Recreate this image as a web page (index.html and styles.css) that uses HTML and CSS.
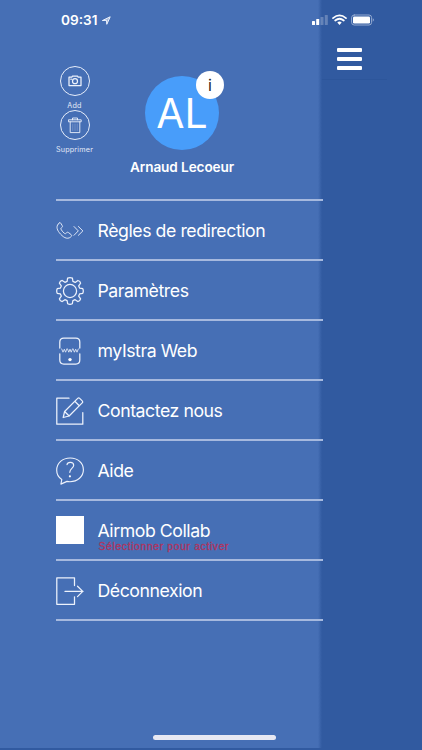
FILE: index.html
```html
<!DOCTYPE html>
<html lang="fr">
<head>
<meta charset="utf-8">
<title>Menu</title>
<link rel="stylesheet" href="styles.css">
</head>
<body>
<div class="screen">
  <aside class="drawer">
    <header class="profile">
      <div class="photo-actions">
        <div class="round"><svg width="14" height="12" viewBox="0 0 14 12"><path d="M1 2.2h2.8l.7-1.2h5l.7 1.2H13v8.3H1z"/><circle cx="7" cy="6.2" r="2.5"/><path d="M2.8 4.2h.6"/></svg></div>
        <span>Add</span>
        <div class="round"><svg class="thin" width="14" height="17" viewBox="0 0 14 17"><path d="M.8 2.8h12.4v2H.8zM4.5 2.8V1h5v1.8M2.2 4.8v10.8h9.6V4.8"/><path opacity=".3" d="M4.8 7v6.5M7 7v6.5M9.2 7v6.5"/></svg></div>
        <span>Supprimer</span>
      </div>
      <div class="identity">
        <div class="avatar">AL<span class="info">i</span></div>
        <div class="name">Arnaud Lecoeur</div>
      </div>
    </header>
    <nav class="menu">
      <div class="item"><svg class="thin" viewBox="0 0 28 28"><path d="M3 6.2C.2 8.5.3 12 3.4 15.8c3.3 4.1 7.5 7.3 11.3 4.2 1.2-1 1.3-1.6.2-2.6l-2.4-1.8c-1-.7-1.6-.3-2.4.6-.6.7-1.3.5-2.1-.2-1.3-1.1-2.4-2.5-3-3.8-.3-.8 0-1.2.7-1.6.8-.5 1-1.1.5-2L4.9 6.4C4.3 5.4 3.8 5.5 3 6.2zM18 9.5l4.3 4.4-4.3 4.4M22.4 9.5l4.5 4.4-4.5 4.4"/></svg><span>Règles de redirection</span></div>
      <div class="item"><svg viewBox="0 0 28 28"><path d="M11.6 1.2Q14 .2 16.4 1.2L16.9 4.4 19.2 5.4 21.9 3.5Q24.2 4 24.6 6.2L22.7 8.9 23.6 11.1 26.8 11.7Q27.8 14 26.8 16.3L23.6 16.9 22.7 19.1 24.6 21.8Q24 24.2 21.8 24.6L19.1 22.7 16.9 23.6 16.3 26.8Q14 27.8 11.7 26.8L11.1 23.6 8.9 22.7 6.2 24.6Q3.8 24 3.4 21.8L5.3 19.1 4.4 16.9 1.2 16.3Q.2 14 1.2 11.7L4.4 11.1 5.3 8.9 3.4 6.2Q4 3.8 6.2 3.4L8.9 5.3 11.1 4.4z"/><circle cx="14" cy="14" r="6.6"/></svg><span>Paramètres</span></div>
      <div class="item"><svg viewBox="0 0 28 28"><path d="M3.8 11V5q0-4 4-4h12q4 0 4 4v6M3.8 16.8V23q0 4 4 4h12q4 0 4-4v-6.2"/><path class="web" d="M5.7 12l1.3 3.2 1.3-3 1.3 3 1.2-3.2M11.5 12l1.3 3.2 1.2-3 1.2 3 1.3-3.2M17.2 12l1.2 3.2 1.3-3 1.3 3 1.3-3.2"/><circle class="dot" cx="14" cy="22.6" r="1.7"/></svg><span>myIstra Web</span></div>
      <div class="item"><svg viewBox="0 0 28 28"><path d="M13 1.2H.8v26h26V15.5M7.2 20.5l1.4-6L21.7 1.4q1-.9 2 0l2.5 2.5q1 1 0 2L13.1 19zM8.6 14.5l4.5 4.5M18.8 4.3l4.5 4.5"/></svg><span>Contactez nous</span></div>
      <div class="item"><svg viewBox="0 0 28 28"><path class="bubble" d="M5.8 22.5C2.4 20.4.7 17 .7 13.3.7 6 6.5 1 14.2 1S27.4 6 27.4 12.8 21.5 24.7 14 24.7q-1.6 0-3-.3L4.9 27.1z"/><path class="bubble" d="M11 7.7c.5-3.1 6.6-3.1 6.7.5 0 3.1-3.9 3.5-3.9 7.1"/><circle class="dot" cx="13.9" cy="19.3" r="1.1"/></svg><span>Aide</span></div>
      <div class="item"><i class="check"></i><span>Airmob Collab<small>Sélectionner pour activer</small></span></div>
      <div class="item"><svg viewBox="0 0 28 28"><path d="M18.5 8.5V.8H.8v26.5h17.7v-7.5M9 14.4h18M21.5 9.2l5.3 5.2-5.3 5.2"/></svg><span>Déconnexion</span></div>
    </nav>
  </aside>
  <main class="behind">
    <div class="topbar"><div class="burger"><i></i><i></i><i></i></div></div>
  </main>
  <div class="status">
    <span class="time">09:31</span>
    <svg class="arrow" width="9" height="9" viewBox="0 0 9 9"><path d="M.7 4.4L8.2.8 4.8 8.3 4.5 4.7z"/></svg>
    <svg class="signals" width="64" height="14" viewBox="0 0 64 14"><g fill="#fff"><rect x="0" y="8" width="3" height="4" rx=".6"/><rect x="4.2" y="6" width="3" height="6" rx=".6"/><g opacity=".25"><rect x="8.5" y="4" width="3" height="8" rx=".6"/><rect x="12.8" y="2" width="3" height="10" rx=".6"/></g><path d="M25.3 9.5q2.2-1.8 4.4 0l-2.2 2.4z"/></g><path d="M21 5.1q6.5-5.4 13 0M23.2 7.5q4.3-3.5 8.6 0" fill="none" stroke="#fff" stroke-width="1.7"/><rect x="39.6" y="2" width="20" height="10" rx="2.6" fill="none" stroke="#a0b4d7" stroke-width=".9"/><rect x="41" y="3.4" width="17" height="7.2" rx="1.3" fill="#fff"/><path d="M60.8 5.3q2 1.7 0 3.4z" fill="#a0b4d7"/></svg>
  </div>
  <div class="home"></div>
</div>
</body>
</html>
```
FILE: styles.css
```css
* { box-sizing: border-box; }
body { margin: 0; font-family: Inter, "Liberation Sans", sans-serif; color: #fff; }
.screen { position: relative; display: grid; grid-template-columns: 322px 100px; width: 422px; height: 750px; background: #315aa0; overflow: hidden; }
.drawer { height: 748px; padding-left: 56px; background: linear-gradient(90deg, #466fb5 318px, #315aa0 322px); }
.profile { display: flex; height: 199px; padding-top: 66px; }
.photo-actions { display: flex; flex-direction: column; align-items: center; width: 37px; font-size: 7.2px; letter-spacing: .2px; color: #e3eaf7; }
.photo-actions span { height: 14px; line-height: 19px; }
.round { display: flex; align-items: center; justify-content: center; width: 30px; height: 30px; flex: none; border: 1px solid #e6edfa; border-radius: 50%; position: relative; top: .4px; }
svg { display: block; flex: none; fill: none; stroke: #edf2fc; stroke-width: 1.25; stroke-linejoin: round; stroke-linecap: round; }
svg.thin { stroke-width: .9; }
.identity { display: flex; flex-direction: column; align-items: center; width: 178px; padding-top: 10px; }
.avatar { position: relative; width: 74px; height: 74px; border-radius: 50%; background: #489dfa; text-align: center; font-size: 41px; line-height: 75px; }
.info { position: absolute; left: 51px; top: -5px; width: 28px; height: 28px; border-radius: 50%; background: #fff; color: #222; font-size: 16px; line-height: 28px; }
.name { margin-top: 8px; font-size: 13.6px; line-height: 18px; font-weight: 600; letter-spacing: -.1px; white-space: nowrap; }
.menu { width: 267px; border-bottom: 2px solid #a6b9de; }
.item { display: flex; align-items: center; height: 60px; padding-top: 1px; border-top: 2px solid #a6b9de; font-size: 17.7px; line-height: 24px; letter-spacing: -.44px; }
.item > svg, .check { width: 28px; height: 28px; margin-right: 13.5px; flex: none; }
.item > span { position: relative; white-space: nowrap; }
.check { background: #fff; position: relative; top: -.5px; }
.item .web { stroke-width: .8; }
.item .bubble { stroke-width: 1.15; }
.dot { fill: #fff; stroke: none; }
.item small { position: absolute; left: 1px; top: 21px; font-family: "Liberation Sans", sans-serif; font-size: 10.5px; line-height: 12px; letter-spacing: .58px; color: #b03460; -webkit-text-stroke: .3px #b03460; }
.topbar { height: 80px; width: 65px; padding: 48px 0 0 15px; border-bottom: 1px solid #2d569b; }
.burger { display: grid; gap: 5px; width: 25px; }
.burger i { height: 4px; border-radius: 1px; background: #fff; }
.status { position: absolute; left: 61px; top: 12px; width: 315px; height: 16px; display: flex; align-items: center; }
.time { width: 38px; font-size: 13.6px; line-height: 16px; font-weight: 600; }
.arrow { margin-left: 3px; stroke-width: 1; fill: rgba(255, 255, 255, .5); }
.signals { margin-left: auto; stroke: none; }
.home { position: absolute; left: 153px; top: 735px; width: 123px; height: 5px; border-radius: 3px; background: #e7e8f2; }
```
